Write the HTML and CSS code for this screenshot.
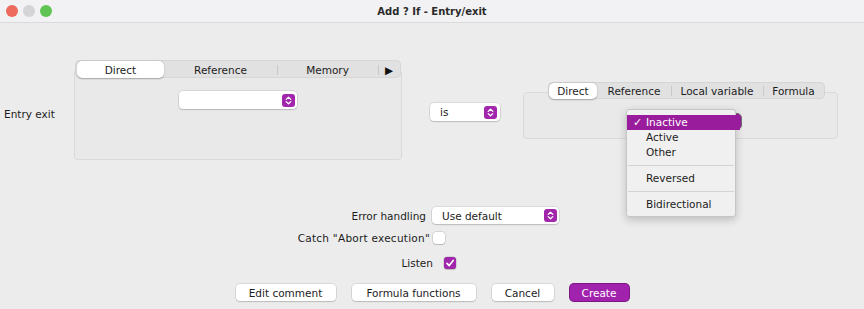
FILE: index.html
```html
<!DOCTYPE html>
<html lang="en">

<head>
    <meta charset="UTF-8">
    <meta name="viewport" content="width=device-width, initial-scale=1.0">
    <title>Add ? If - Entry/exit</title>
    <link rel="stylesheet" href="styles.css">
</head>

<body>
    <div class="window">
        <div class="titlebar">
            <div class="lights">
                <span class="light red"></span>
                <span class="light grey"></span>
                <span class="light green"></span>
            </div>
            <div class="title">Add ? If - Entry/exit</div>
        </div>

        <div class="content">
            <div class="condition">
                <div class="entry-label">Entry exit</div>

                <div class="tabpanel left-panel">
                    <div class="tabbar">
                        <div class="tab active tab-direct">Direct</div>
                        <div class="tab tab-reference">Reference</div>
                        <div class="tab sep tab-memory">Memory</div>
                        <div class="tab sep tab-more">&#9654;</div>
                    </div>
                    <div class="tabbody">
                        <div class="combo combo-value">
                            <span></span>
                            <svg class="stepper" width="13" height="13" viewBox="0 0 13 13"><rect width="13" height="13" rx="3" fill="#a126ac"/><path d="M4.2 5.4 6.5 3.2 8.8 5.4M4.2 7.6 6.5 9.8 8.8 7.6" fill="none" stroke="#fff" stroke-width="1.3" stroke-linecap="round" stroke-linejoin="round"/></svg>
                        </div>
                    </div>
                </div>

                <div class="combo combo-is">
                    <span>is</span>
                    <svg class="stepper" width="13" height="13" viewBox="0 0 13 13"><rect width="13" height="13" rx="3" fill="#a126ac"/><path d="M4.2 5.4 6.5 3.2 8.8 5.4M4.2 7.6 6.5 9.8 8.8 7.6" fill="none" stroke="#fff" stroke-width="1.3" stroke-linecap="round" stroke-linejoin="round"/></svg>
                </div>

                <div class="tabpanel right-panel">
                    <div class="tabbar">
                        <div class="tab active tab-rdirect">Direct</div>
                        <div class="tab tab-rreference">Reference</div>
                        <div class="tab sep tab-local">Local variable</div>
                        <div class="tab sep tab-formula">Formula</div>
                    </div>
                    <div class="tabbody">
                        <div class="state-select">
                            <div class="state-combo"></div>
                            <ul class="popup">
                                <li class="item selected"><span class="check">&#10003;</span>Inactive</li>
                                <li class="item">Active</li>
                                <li class="item">Other</li>
                                <li class="separator"></li>
                                <li class="item">Reversed</li>
                                <li class="separator"></li>
                                <li class="item">Bidirectional</li>
                            </ul>
                        </div>
                    </div>
                </div>
            </div>

            <div class="form">
                <div class="form-row row-error">
                    <div class="form-label">Error handling</div>
                    <div class="combo combo-error">
                        <span>Use default</span>
                        <svg class="stepper" width="13" height="13" viewBox="0 0 13 13"><rect width="13" height="13" rx="3" fill="#a126ac"/><path d="M4.2 5.4 6.5 3.2 8.8 5.4M4.2 7.6 6.5 9.8 8.8 7.6" fill="none" stroke="#fff" stroke-width="1.3" stroke-linecap="round" stroke-linejoin="round"/></svg>
                    </div>
                </div>
                <div class="form-row row-catch">
                    <div class="form-label">Catch "Abort execution"</div>
                    <div class="checkbox"></div>
                </div>
                <div class="form-row row-listen">
                    <div class="form-label">Listen</div>
                    <div class="checkbox checked">
                        <svg width="12" height="12" viewBox="0 0 12 12"><path d="M3 6.3 5.2 8.6 9.2 3.4" fill="none" stroke="#fff" stroke-width="1.7" stroke-linecap="round" stroke-linejoin="round"/></svg>
                    </div>
                </div>

                <div class="buttons">
                    <button class="btn btn-comment">Edit comment</button>
                    <button class="btn btn-functions">Formula functions</button>
                    <button class="btn btn-cancel">Cancel</button>
                    <button class="btn btn-create primary">Create</button>
                </div>
            </div>
        </div>
    </div>
</body>

</html>
```

FILE: styles.css
```css
body {
    margin: 0;
    font-family: 'DejaVu Sans', sans-serif;
    font-size: 10.5px;
    color: #1c1c1c;
    background-color: #ececec;
    overflow: hidden;
}

.window {
    width: 864px;
    height: 309px;
}

.titlebar {
    height: 23px;
    box-sizing: border-box;
    background-color: #f2f2f5;
    border-bottom: 1px solid #dadadd;
    display: grid;
    grid-template-columns: 1fr auto 1fr;
    align-items: center;
}

.lights {
    display: flex;
    gap: 5px;
    padding-left: 6px;
}

.light {
    width: 12px;
    height: 12px;
    border-radius: 50%;
}

.red {
    background-color: #ee6a5f;
}

.grey {
    background-color: #d4d4d7;
}

.green {
    background-color: #5fc454;
}

.title {
    font-size: 10px;
    font-weight: bold;
    color: #2a2a2a;
}

.content {
    padding-top: 37px;
}

/* top row */
.condition {
    display: flex;
    align-items: center;
    padding-left: 4px;
}

.entry-label {
    margin-top: 8px;
    width: 51px;
    line-height: 13px;
    white-space: nowrap;
}

.tabpanel {
    display: flex;
    flex-direction: column;
    align-items: center;
}

.tabbar {
    position: relative;
    z-index: 1;
    display: flex;
    box-sizing: border-box;
    background-color: #e1e1e1;
    border-radius: 5px;
    box-shadow: inset 0 0 0 1px #d6d6d6;
}

.tab {
    position: relative;
    display: flex;
    align-items: center;
    justify-content: center;
    white-space: nowrap;
}

.tab.active {
    background-color: #fff;
    border-radius: 5px;
    box-shadow: 0 0.5px 1.5px rgba(0, 0, 0, 0.3);
}

.tab.sep::before {
    content: "";
    position: absolute;
    left: 0;
    top: 50%;
    height: 10px;
    margin-top: -5px;
    width: 1px;
    background-color: #c9c9c9;
}

.tabbody {
    align-self: stretch;
    box-sizing: border-box;
    background-color: #e9e9e9;
    border: 1px solid #dadada;
    border-radius: 4px;
    display: flex;
    flex-direction: column;
    align-items: center;
}

.left-panel {
    margin-left: 19px;
    width: 328px;
}

.left-panel .tabbar {
    width: 326px;
    height: 18px;
    padding: 1px 1px 0 2px;
    margin-bottom: -9px;
}

.left-panel .tabbody {
    height: 91px;
    padding-top: 21px;
}

.tab-direct {
    width: 87px;
}

.tab-reference {
    width: 113px;
}

.tab-memory {
    width: 101px;
}

.tab-more {
    flex: 1;
    font-size: 10.5px;
    color: #111;
}

.right-panel {
    margin-left: 23px;
    width: 315px;
}

.right-panel .tabbar {
    width: 277px;
    height: 17px;
    padding: 1px 1px 0 1px;
    margin-left: 12px;
    margin-bottom: -7px;
}

.right-panel .tabbody {
    height: 47px;
    padding-top: 20px;
}

.tab-rdirect {
    width: 48px;
}

.tab-rreference {
    width: 74px;
}

.tab-local {
    width: 92px;
}

.tab-formula {
    width: 61px;
}

/* combos */
.combo {
    height: 18px;
    box-sizing: border-box;
    background-color: #fff;
    border-radius: 4px;
    box-shadow: 0 0 0 0.5px rgba(0, 0, 0, 0.16), 0 1px 1.5px rgba(0, 0, 0, 0.14);
    display: flex;
    align-items: center;
    justify-content: space-between;
    padding: 0 2px 0 10px;
}

.stepper {
    display: block;
}

.combo-value {
    width: 118px;
}

.combo-is {
    margin-left: 28px;
    margin-top: 4px;
    width: 70px;
    padding-right: 3px;
}

.combo-error {
    width: 127px;
    height: 17px;
}

/* state dropdown (open) */
.state-select {
    position: relative;
    margin-left: 7px;
}

.state-combo {
    width: 116px;
    height: 17px;
    box-sizing: border-box;
    background-color: #981c9c;
    border: 1px solid #6e6e6e;
    border-radius: 5px;
}

.popup {
    position: absolute;
    top: -4px;
    left: 0;
    z-index: 2;
    width: 110px;
    margin: 0;
    padding: 5px 0 4px;
    list-style: none;
    box-sizing: border-box;
    background-color: #f0f0f0;
    border: 1px solid #c6c6c6;
    border-radius: 3px;
    box-shadow: 0 3px 8px rgba(0, 0, 0, 0.2);
}

.item {
    position: relative;
    height: 15px;
    line-height: 15px;
    padding-left: 19px;
    white-space: nowrap;
    color: #1c1c1c;
}

.item.selected {
    background-color: #981c9c;
    color: #fff;
    margin-right: -5px;
}

.check {
    position: absolute;
    left: 6px;
    font-size: 11px;
    font-weight: bold;
}

.separator {
    height: 11px;
    position: relative;
}

.separator::after {
    content: "";
    position: absolute;
    left: 1px;
    right: 1px;
    top: 5px;
    height: 1px;
    background-color: #d3d3d3;
}

/* lower form */
.form {
    margin-top: 47px;
}

.form-row {
    display: flex;
    align-items: center;
}

.form-label {
    width: 430px;
    box-sizing: border-box;
    text-align: right;
    white-space: nowrap;
}

.row-error {
    height: 17px;
}

.row-error .form-label {
    padding-right: 4px;
}

.row-error .combo {
    margin-left: 2px;
}

.row-catch {
    margin-top: 7px;
    height: 14px;
}

.row-catch .form-label {
    letter-spacing: 0.25px;
}

.row-catch .checkbox {
    margin-left: 3px;
}

.row-listen {
    margin-top: 11px;
    height: 14px;
}

.row-listen .form-label {
    width: 433px;
}

.row-listen .checkbox {
    margin-left: 11px;
}

.checkbox {
    width: 12px;
    height: 12px;
    box-sizing: border-box;
    background-color: #fff;
    border-radius: 3px;
    box-shadow: 0 0 0 0.5px rgba(0, 0, 0, 0.2), 0 1px 1px rgba(0, 0, 0, 0.12);
}

.checkbox.checked {
    background-color: #a126ac;
}

.checkbox svg {
    display: block;
}

.buttons {
    margin-top: 14px;
    display: flex;
    justify-content: center;
    gap: 16px;
}

.btn {
    height: 17px;
    padding: 0;
    border: none;
    border-radius: 4px;
    background-color: #fff;
    font-family: 'DejaVu Sans', sans-serif;
    font-size: 10.5px;
    color: #1c1c1c;
    box-shadow: 0 0 0 0.5px rgba(0, 0, 0, 0.16), 0 1px 1.5px rgba(0, 0, 0, 0.14);
}

.btn-comment {
    width: 100px;
}

.btn-functions {
    width: 124px;
}

.btn-cancel {
    width: 62px;
}

.btn-create {
    width: 59px;
}

.btn.primary {
    background-color: #a122ad;
    color: #fff;
    box-shadow: 0 0 0 1px #7c1785, 0 1px 1px rgba(0, 0, 0, 0.15);
}
```
